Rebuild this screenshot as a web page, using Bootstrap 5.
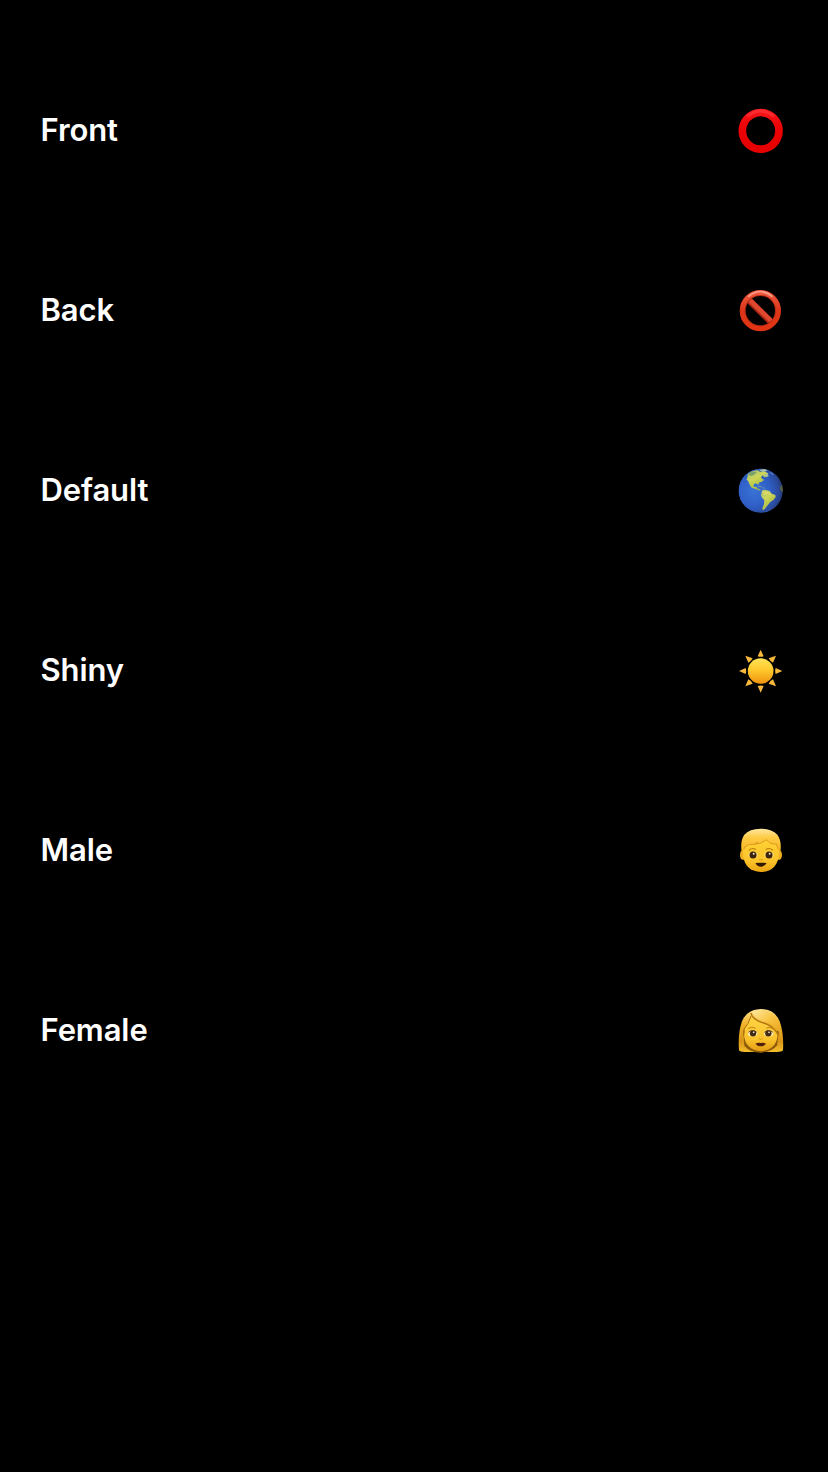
<!DOCTYPE html>
<html lang="en">
<head>
<meta charset="utf-8">
<meta name="viewport" content="width=device-width, initial-scale=1">
<title>Options</title>
<link href="https://cdn.jsdelivr.net/npm/bootstrap@5.3.0/dist/css/bootstrap.min.css" rel="stylesheet">
<style>
body{background:#000;font-family:Inter,"Liberation Sans",sans-serif}
.options{padding-top:40px}
.options .list-group-item{height:180px;padding:0 40px;background:#000;color:#fff;font-size:31px;font-weight:600;line-height:40px;letter-spacing:-.1px}
.options span{padding-left:.5px}
.emoji{width:56px;height:56px}
</style>
</head>
<body class="min-vh-100">
<ul class="list-group list-group-flush options">
<li class="list-group-item border-0 d-flex justify-content-between align-items-center">
<span>Front</span>
<svg class="emoji" viewBox="0 0 168 168" aria-hidden="true">
<defs><linearGradient id="ring" x1="0" y1="0" x2="0" y2="1"><stop offset="0" stop-color="#f81c20"/><stop offset=".3" stop-color="#ee080a"/><stop offset=".6" stop-color="#e80002"/><stop offset="1" stop-color="#e60000"/></linearGradient></defs>
<path fill="url(#ring)" fill-rule="evenodd" d="M86 20a66.500 66.500 0 1 0 .1 0zM86 43a43.500 43.500 0 1 1-.1 0z"/>
<path d="M49 41Q86 13 123 41" fill="none" stroke="#ff4044" stroke-width="9" stroke-linecap="round" opacity=".5"/>
</svg>
</li>
<li class="list-group-item border-0 d-flex justify-content-between align-items-center">
<span>Back</span>
<svg class="emoji" viewBox="0 0 168 168" aria-hidden="true">
<defs><linearGradient id="ban" x1="0" y1="0" x2="0" y2="1"><stop offset="0" stop-color="#ee5a40"/><stop offset=".5" stop-color="#dc3519"/><stop offset="1" stop-color="#e23414"/></linearGradient></defs>
<path d="M46 50L121 124" stroke="#a82410" stroke-width="20"/>
<path d="M47 48L123 122" stroke="#de482f" stroke-width="14"/>
<circle cx="85" cy="86" r="53" fill="none" stroke="#b52a12" stroke-width="18"/>
<circle cx="85" cy="86" r="54" fill="none" stroke="url(#ban)" stroke-width="14"/>
<path d="M50 43Q85 14 120 43" fill="none" stroke="#ffb5a4" stroke-width="5" stroke-linecap="round" opacity=".75"/>
</svg>
</li>
<li class="list-group-item border-0 d-flex justify-content-between align-items-center">
<span>Default</span>
<svg class="emoji" viewBox="0 0 168 168" aria-hidden="true">
<defs><radialGradient id="sea" cx=".36" cy=".5" r=".64"><stop offset="0" stop-color="#3a73d8"/><stop offset=".55" stop-color="#2f5fc6"/><stop offset=".85" stop-color="#2b4a9c"/><stop offset="1" stop-color="#223872"/></radialGradient>
<linearGradient id="land" x1="0" y1="0" x2=".6" y2="1"><stop offset="0" stop-color="#a3bd80"/><stop offset=".45" stop-color="#cdd657"/><stop offset="1" stop-color="#9fb63c"/></linearGradient>
<clipPath id="world"><circle cx="86" cy="86" r="66.500"/></clipPath></defs>
<g clip-path="url(#world)">
<circle cx="86" cy="86" r="67" fill="url(#sea)"/>
<path d="M47 36L61 27L77 25L84 30L94 27L109 34L106 44L98 46L91 40L87 47L96 54L88 60L82 61L79 68L71 64L64 68L66 75L74 74L75 79L86 83L84 86L73 82L59 77L53 68L49 58L44 53L47 44Z" fill="url(#land)"/>
<path d="M47 37L61 28L74 31L66 39L55 42Z" fill="#78a16b"/>
<path d="M80 24L97 21L107 25L99 29L87 28ZM97 38L107 34L110 43L103 45Z" fill="#a7bda9"/>
<path d="M78 72L88 74M92 77L98 79" stroke="#a9be6d" stroke-width="2"/>
<path d="M90 85L100 83L113 87L119 95L130 99L131 105L124 114L115 120L107 130L98 141L93 145L91 139L96 127L97 114L90 107L87 99Z" fill="url(#land)"/>
<path d="M92 89L101 87L110 91L116 99L106 96L96 99Z" fill="#dcd966"/>
<path d="M146 71L153 67V90L148 88L144 80Z" fill="#5c623f"/>
<path d="M110 29L122 34L126 39L119 37Z" fill="#588bd2"/>
</g>
</svg>
</li>
<li class="list-group-item border-0 d-flex justify-content-between align-items-center">
<span>Shiny</span>
<svg class="emoji" viewBox="0 0 168 168" aria-hidden="true">
<defs><linearGradient id="sun" x1="0" y1="0" x2="0" y2="1"><stop offset="0" stop-color="#ffe458"/><stop offset=".45" stop-color="#ffc92d"/><stop offset="1" stop-color="#f0930e"/></linearGradient></defs>
<circle cx="86" cy="87" r="38.500" fill="url(#sun)"/>
<path fill="#f7b83c" d="M86 23L95 43Q86 46 77 43ZM86 152L77 132Q86 129 95 132ZM21 87L41 78Q44 87 41 96ZM151 87L131 96Q128 87 131 78ZM40 41L62 49Q58 58 49 62ZM132 41L123 62Q114 58 110 49ZM40 133L49 112Q58 116 62 125ZM132 133L110 125Q114 116 123 112Z"/>
</svg>
</li>
<li class="list-group-item border-0 d-flex justify-content-between align-items-center">
<span>Male</span>
<svg class="emoji" viewBox="0 0 168 168" aria-hidden="true">
<defs><linearGradient id="boySkin" x1="0" y1="0" x2="0" y2="1"><stop offset="0" stop-color="#ffd337"/><stop offset=".7" stop-color="#fcc42a"/><stop offset="1" stop-color="#eba513"/></linearGradient>
<linearGradient id="boyHair" x1="0" y1="0" x2="0" y2="1"><stop offset="0" stop-color="#ffe7a0"/><stop offset=".4" stop-color="#fecb43"/><stop offset="1" stop-color="#f5b424"/></linearGradient></defs>
<ellipse cx="33" cy="99" rx="9" ry="15" fill="#efaf22"/><ellipse cx="141" cy="99" rx="9" ry="15" fill="#efaf22"/>
<path d="M32 67Q37 37 87 37Q137 37 142 67L141 96Q137 148 87 150Q37 148 33 96Z" fill="url(#boySkin)"/>
<path d="M29 88Q24 57 37 38Q52 20 86 20Q120 20 136 38Q150 57 145 88L140 86L134 66Q118 69 104 53Q78 70 55 67Q44 67 37 77L33 87Z" fill="url(#boyHair)"/>
<path d="M36 82L38 75Q48 65 66 67Q88 66 104 53Q115 68 133 66L139 82M66 67L78 60" fill="none" stroke="#d6921b" stroke-width="2.500"/>
<path d="M52 84Q61 76 70 82M103 82Q112 76 121 84" fill="none" stroke="#b87a12" stroke-width="3.500" stroke-linecap="round"/>
<ellipse cx="63" cy="99" rx="14" ry="9" fill="#ffe08a"/><ellipse cx="111" cy="99" rx="14" ry="9" fill="#ffe08a"/>
<circle cx="63" cy="99" r="10.500" fill="#3c230b"/><circle cx="111" cy="99" r="10.500" fill="#3c230b"/>
<circle cx="65" cy="95" r="3" fill="#eee5c7"/><circle cx="113" cy="95" r="3" fill="#eee5c7"/>
<path d="M81 112Q87 116 93 112" fill="none" stroke="#dfa01a" stroke-width="3"/>
<path d="M70 123Q87 121 104 123Q99 134 87 134Q75 134 70 123Z" fill="#321805"/>
</svg>
</li>
<li class="list-group-item border-0 d-flex justify-content-between align-items-center">
<span>Female</span>
<svg class="emoji" viewBox="0 0 168 168" aria-hidden="true">
<defs><linearGradient id="womanHair" x1="0" y1="0" x2="0" y2="1"><stop offset="0" stop-color="#ffe08b"/><stop offset=".35" stop-color="#f1b42a"/><stop offset=".75" stop-color="#d89418"/><stop offset="1" stop-color="#f5bf2c"/></linearGradient>
<linearGradient id="womanSkin" x1="0" y1="0" x2="0" y2="1"><stop offset="0" stop-color="#ffd345"/><stop offset=".65" stop-color="#fbc32d"/><stop offset="1" stop-color="#e39c12"/></linearGradient>
<linearGradient id="womanSweep" x1="0" y1="0" x2="1" y2="1"><stop offset="0" stop-color="#ffe8a4"/><stop offset=".5" stop-color="#f9c544"/><stop offset="1" stop-color="#e6a31c"/></linearGradient></defs>
<path d="M21 145Q17 94 30 58Q44 22 86 21Q129 22 143 58Q156 94 153 145Q150 150 134 150H38Q24 150 21 145Z" fill="url(#womanHair)"/>
<path d="M34 86L37 131Q54 152 86 152Q120 151 135 130L141 86Z" fill="#8c5a0a"/>
<path d="M58 44Q80 62 112 71Q137 78 137 98Q134 143 87 148Q39 143 36 99Q38 72 58 44Z" fill="url(#womanSkin)"/>
<path d="M57 33Q60 50 88 61Q124 69 140 100" fill="none" stroke="#ae7212" stroke-width="4"/>
<path d="M57 42Q50 67 36 81L35 102" fill="none" stroke="#ad710b" stroke-width="3"/>
<path d="M60 27Q65 49 95 57Q127 64 143 94Q147 65 129 42Q112 23 86 23Q70 23 60 27Z" fill="url(#womanSweep)"/>
<path d="M50 79Q59 72 70 78M104 78Q114 72 122 80" fill="none" stroke="#be8112" stroke-width="3" stroke-linecap="round"/>
<ellipse cx="62" cy="94" rx="14" ry="9.500" fill="#fff0c2"/><ellipse cx="110" cy="94" rx="14" ry="9.500" fill="#fff0c2"/>
<circle cx="63" cy="94" r="9.500" fill="#462a0f"/><circle cx="109" cy="94" r="9.500" fill="#462a0f"/>
<path d="M49 91Q61 80 75 91M97 91Q110 80 123 91" fill="none" stroke="#5c360c" stroke-width="2.500"/>
<circle cx="65" cy="91" r="2.500" fill="#fff"/><circle cx="111" cy="91" r="2.500" fill="#fff"/>
<path d="M80 110Q86 114 93 110" fill="none" stroke="#d99a18" stroke-width="3"/>
<path d="M70 125Q78 121 86 123Q94 121 102 125Q96 133 86 133Q76 133 70 125Z" fill="#51200c"/>
</svg>
</li>
</ul>
<script src="https://cdn.jsdelivr.net/npm/bootstrap@5.3.0/dist/js/bootstrap.bundle.min.js"></script>
</body>
</html>
